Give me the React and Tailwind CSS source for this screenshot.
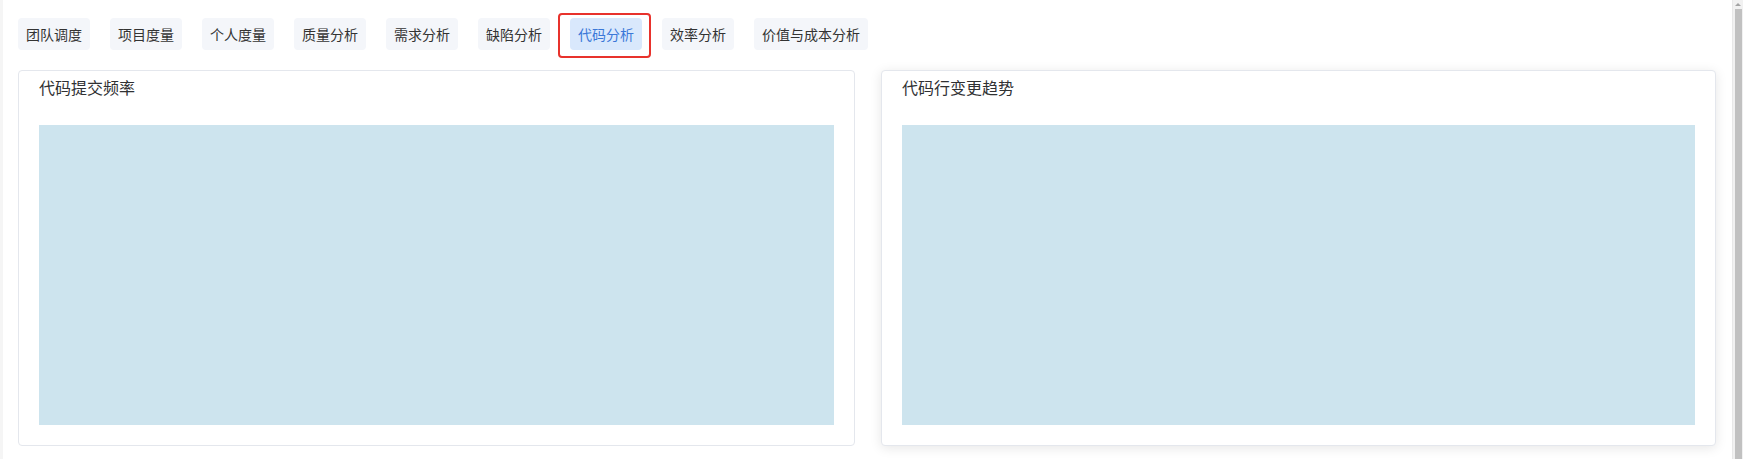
import { useState } from "react";

const tabs = [
  "团队调度",
  "项目度量",
  "个人度量",
  "质量分析",
  "需求分析",
  "缺陷分析",
  "代码分析",
  "效率分析",
  "价值与成本分析",
];

function ChartCard({ title, raised }) {
  return (
    <div
      className={
        "bg-white border border-[#e4e7ed] rounded-[4px] px-5 pt-[4px] pb-5 " +
        (raised ? "shadow-[0_2px_12px_rgba(0,0,0,0.1)]" : "")
      }
    >
      <h2 className="text-[16px] leading-[24px] text-[#303133] font-normal">
        {title}
      </h2>
      <div className="mt-[26px] h-[300px] bg-[#cde4ee]" />
    </div>
  );
}

export default function App() {
  const [active, setActive] = useState("代码分析");

  return (
    <div
      className="flex h-[459px] overflow-hidden bg-white"
      style={{ fontFamily: '"Noto Sans CJK SC", "Liberation Sans", sans-serif' }}
    >
      <div className="w-[3px] shrink-0 bg-[#f5f5f5]" />

      <div className="flex-1 pl-[15px] pr-[16px] pt-[18px]">
        <div className="flex gap-5">
          {tabs.map((tab) => {
            const isActive = tab === active;
            return (
              <div key={tab} className="relative">
                {isActive && (
                  <div className="absolute -left-3 -right-[9px] -top-[5px] -bottom-2 border-2 border-[#e8322c] rounded-[4px] pointer-events-none" />
                )}
                <button
                  type="button"
                  onClick={() => setActive(tab)}
                  className={
                    "h-8 px-2 rounded-[4px] text-[14px] leading-8 " +
                    (isActive
                      ? "bg-[#d9e8fc] text-[#3b78d8]"
                      : "bg-[#f4f6fa] text-[#333333]")
                  }
                >
                  {tab}
                </button>
              </div>
            );
          })}
        </div>

        <div className="grid grid-cols-[837px_1fr] gap-[26px] mt-5">
          <ChartCard title="代码提交频率" />
          <ChartCard title="代码行变更趋势" raised />
        </div>
      </div>

      {/* fake browser scrollbar */}
      <div className="w-[11px] shrink-0 bg-[#f1f1f1] border-l border-[#e8e8e8] flex flex-col items-center">
        <div className="mt-[3px] w-0 h-0 border-l-[3px] border-r-[3px] border-b-[3px] border-l-transparent border-r-transparent border-b-[#a3a3a3]" />
        <div className="mt-[3px] w-[7px] flex-1 bg-[#c1c1c1]" />
      </div>
    </div>
  );
}
